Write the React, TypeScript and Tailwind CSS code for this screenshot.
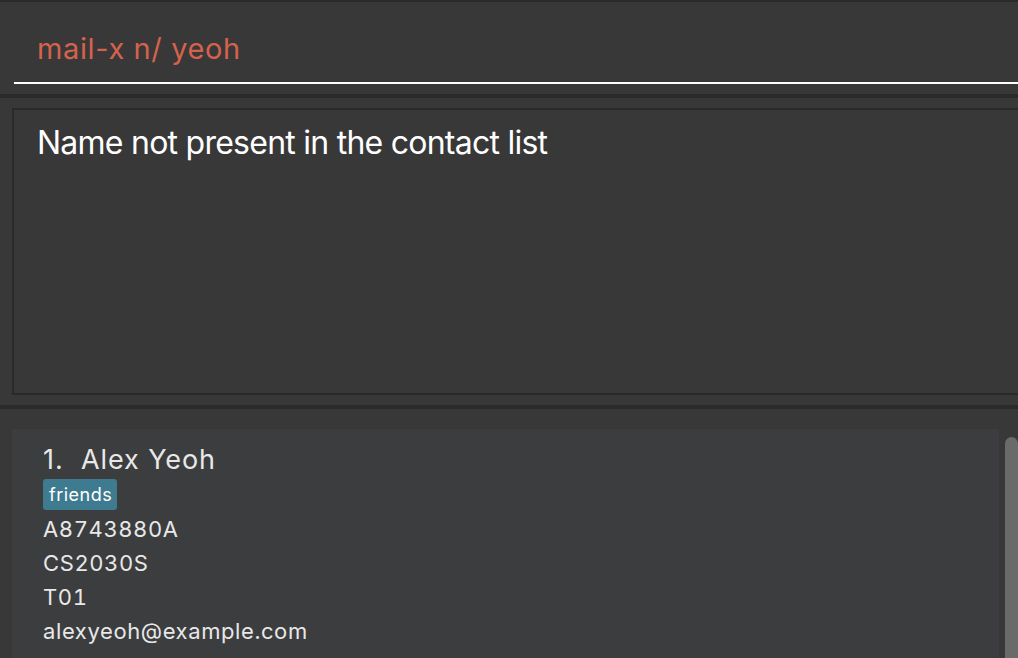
export default function App() {
  return (
    <div
      className="w-[1018px] h-[658px] overflow-hidden bg-[#2a2a2a] flex flex-col pt-[2px]"
      style={{ fontFamily: "Inter, 'Liberation Sans', sans-serif" }}
    >
      {/* command box */}
      <div className="h-[92px] shrink-0 bg-[#383838] pl-[14px] flex flex-col">
        <div className="h-[80px] pl-[23px] pt-[29px]">
          <p className="text-[29px] leading-[36px] tracking-[0.6px] text-[#d4624d]">mail-x n/ yeoh</p>
        </div>
        <div className="h-[2px] bg-white" />
      </div>

      <div className="h-[4px] shrink-0" />

      {/* result display */}
      <div className="h-[307px] shrink-0 bg-[#383838] pl-[12px] pt-[10px] pb-[10px]">
        <div className="h-full w-[1020px] border-2 border-[#2a2a2a] pl-[23px] pt-[15px]">
          <p className="text-[32px] leading-[36px] tracking-[-0.75px] text-white">
            Name not present in the contact list
          </p>
        </div>
      </div>

      <div className="h-[4px] shrink-0" />

      {/* person list */}
      <div className="flex-1 bg-[#383838] pl-[12px] pt-[20px] flex">
        <div className="w-[987px] bg-[#3c3d3f] pl-[31px] pt-[14px] text-[#e8e8e8]">
          <div className="text-[27px] leading-[34px] tracking-[0.9px] flex">
            <span className="w-[38px]">1.</span>
            <span>Alex Yeoh</span>
          </div>
          <div className="mt-[2px] inline-block rounded-[3px] bg-[#3e7b91] pl-[6px] pr-[5px] text-[18px] leading-[31px] tracking-[0.5px] text-white">
            friends
          </div>
          <div className="mt-[2px] text-[22px] leading-[34px] tracking-[0.6px] tabular-nums">
            <p>A8743880A</p>
            <p>CS2030S</p>
            <p>T01</p>
            <p>alexyeoh@example.com</p>
          </div>
        </div>
        <div className="w-[6px]" />
        <div className="flex-1 pt-[8px]">
          <div className="h-full w-[13px] rounded-t-[7px] bg-[#6a6a6a]" />
        </div>
      </div>
    </div>
  );
}
